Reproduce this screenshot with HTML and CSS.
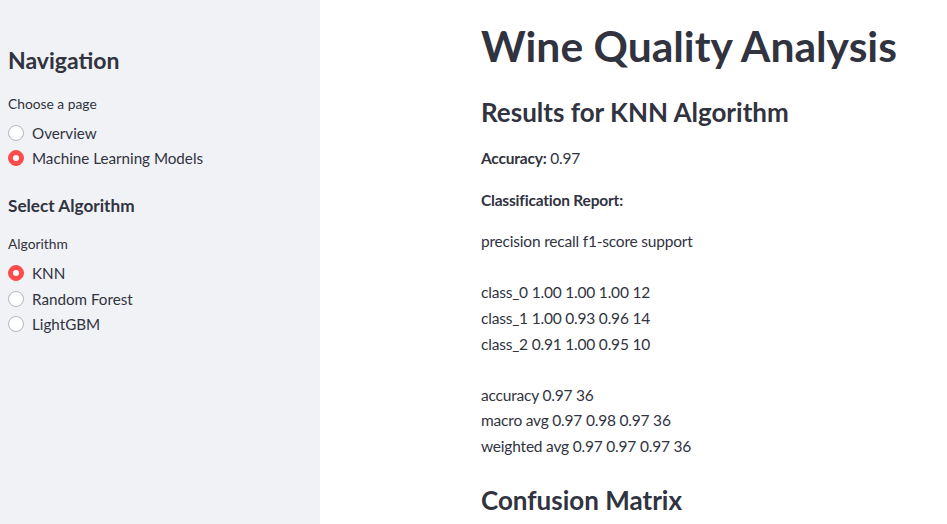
FILE: index.html
```html
<!DOCTYPE html>
<html lang="en">
<head>
<meta charset="utf-8">
<title>Wine Quality Analysis</title>
<link rel="stylesheet" href="styles.css">
</head>
<body>
<div class="app">
  <aside class="sidebar">
    <h2 class="side-h2">Navigation</h2>
    <div class="widget">
      <div class="widget-label">Choose a page</div>
      <div class="radio-group">
        <label class="radio"><span class="dot"></span><span class="opt">Overview</span></label>
        <label class="radio checked"><span class="dot"></span><span class="opt">Machine Learning Models</span></label>
      </div>
    </div>
    <h3 class="side-h3">Select Algorithm</h3>
    <div class="widget after-h3">
      <div class="widget-label">Algorithm</div>
      <div class="radio-group">
        <label class="radio checked"><span class="dot"></span><span class="opt">KNN</span></label>
        <label class="radio"><span class="dot"></span><span class="opt">Random Forest</span></label>
        <label class="radio"><span class="dot"></span><span class="opt">LightGBM</span></label>
      </div>
    </div>
  </aside>
  <main class="main">
    <div class="block">
      <h1 class="title">Wine Quality Analysis</h1>
      <h3 class="subheader first">Results for KNN Algorithm</h3>
      <p class="md"><strong>Accuracy:</strong> 0.97</p>
      <p class="md"><strong>Classification Report:</strong></p>
      <p class="md">precision recall f1-score support<br><br>class_0 1.00 1.00 1.00 12<br>class_1 1.00 0.93 0.96 14<br>class_2 0.91 1.00 0.95 10<br><br>accuracy 0.97 36<br>macro avg 0.97 0.98 0.97 36<br>weighted avg 0.97 0.97 0.97 36</p>
      <h3 class="subheader last">Confusion Matrix</h3>
    </div>
  </main>
</div>
</body>
</html>
```
FILE: styles.css
```css
* { box-sizing: border-box; }
html, body {
  margin: 0;
  padding: 0;
  height: 100%;
  overflow: hidden;
  background: #ffffff;
}
body {
  font-family: Lato, "Noto Sans", sans-serif;
  color: #31333f;
}
.app {
  display: flex;
  height: 524px;
}
.sidebar {
  width: 320px;
  flex: none;
  background: #f0f2f6;
  padding: 45px 8px 0 8px;
}
.side-h2 {
  margin: 0;
  font-size: 23px;
  font-weight: 700;
  line-height: 30px;
}
.side-h3 {
  margin: 23px 0 0 0;
  font-size: 17.2px;
  font-weight: 700;
  line-height: 24px;
}
.widget {
  margin-top: 19px;
}
.widget.after-h3 {
  margin-top: 16px;
}
.widget-label {
  font-size: 13.8px;
  line-height: 20px;
  margin-bottom: 6px;
}
.radio-group {
  display: flex;
  flex-direction: column;
}
.radio {
  display: flex;
  align-items: center;
  gap: 8px;
  height: 25.6px;
  font-size: 15.2px;
}
.dot {
  width: 16px;
  height: 16px;
  border-radius: 50%;
  background: #ffffff;
  border: 1px solid #b4b6c0;
  flex: none;
  display: flex;
  align-items: center;
  justify-content: center;
}
.radio.checked .dot {
  background: #ff4b4b;
  border-color: #ff4b4b;
}
.radio.checked .dot::after {
  content: "";
  width: 6px;
  height: 6px;
  border-radius: 50%;
  background: #ffffff;
}
.main {
  flex: 1;
  min-width: 0;
}
.block {
  padding: 20px 16px 0 161px;
}
.title {
  margin: 0;
  font-size: 42.6px;
  font-weight: 700;
  line-height: 52px;
  white-space: nowrap;
}
.subheader {
  margin: 0;
  font-size: 26px;
  font-weight: 700;
  line-height: 34px;
}
.subheader.first {
  margin-top: 23px;
  margin-bottom: 17px;
}
.subheader.last {
  margin-top: 23px;
}
.md {
  margin: 0 0 16px 0;
  font-size: 15.5px;
  letter-spacing: -0.2px;
  line-height: 25.6px;
}
.md strong { font-weight: 700; }
```
